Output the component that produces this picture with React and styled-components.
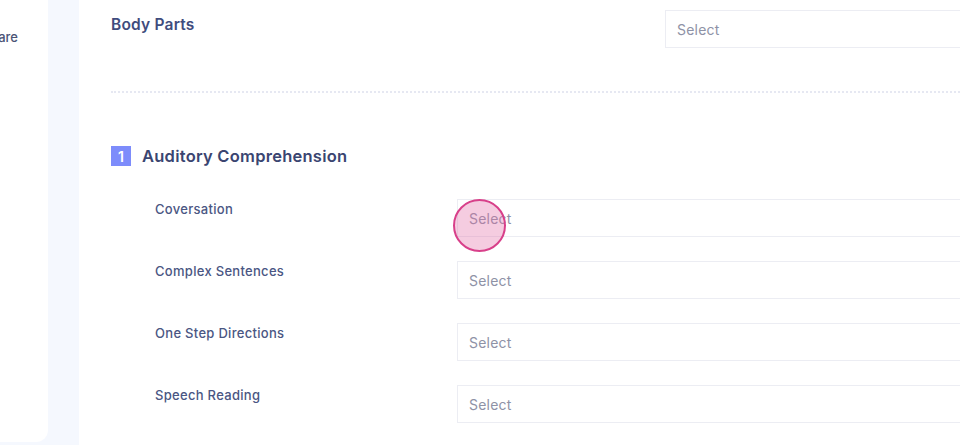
import React from 'react'
import styled, { createGlobalStyle } from 'styled-components'

const GlobalStyle = createGlobalStyle`
    html, body {
        margin: 0;
        padding: 0;
        background: #f5f8fe;
        font-family: "Inter", "Noto Sans", sans-serif;
        overflow: hidden;
    }
`

const Page = styled.div`
    display: flex;
    height: 445px;
    gap: 31px;
`

const Sidebar = styled.div`
    width: 48px;
    flex-shrink: 0;
    background: #ffffff;
    border-bottom-right-radius: 12px;
    margin-bottom: 3px;
    overflow: hidden;
    padding-top: 29px;
    box-sizing: border-box;
`

const MenuItem = styled.div`
    font-size: 13px;
    font-weight: 500;
    color: #4b5476;
    white-space: nowrap;
    direction: rtl;
    text-align: left;
    width: 18px;
    overflow: hidden;
`

const Main = styled.div`
    flex: 1;
    background: #ffffff;
    padding: 10px 0 0 32px;
    overflow: hidden;
    position: relative;
`

const TopRow = styled.div`
    display: flex;
    align-items: flex-start;
`

const TopLabel = styled.div`
    width: 554px;
    padding-top: 5px;
    font-size: 15.5px;
    font-weight: 600;
    letter-spacing: 0.2px;
    color: #3f4c7d;
`

const Select = styled.div`
    flex: 1;
    height: 38px;
    box-sizing: border-box;
    border: 1.5px solid #ecedf3;
    border-right: none;
    display: flex;
    align-items: center;
    padding-left: 11px;
    font-size: 14px;
    letter-spacing: 0.2px;
    color: #8e92a6;
`

const Divider = styled.div`
    margin-top: 43px;
    border-top: 2px dotted #e6e8f2;
`

const Section = styled.div`
    padding-top: 53px;
`

const SectionHead = styled.div`
    display: flex;
    align-items: center;
    gap: 11px;
    margin-bottom: 33px;
`

const Badge = styled.span`
    width: 20px;
    height: 20px;
    background: #7d8cfb;
    color: #ffffff;
    font-size: 14px;
    font-weight: 600;
    display: flex;
    align-items: center;
    justify-content: center;
`

const SectionTitle = styled.h3`
    margin: 0;
    font-size: 16.5px;
    font-weight: 600;
    letter-spacing: 0.25px;
    color: #3a4571;
`

const Row = styled.div`
    display: flex;
    align-items: flex-start;
    padding-left: 44px;
    margin-bottom: 24px;
`

const RowLabel = styled.div`
    width: 302px;
    flex-shrink: 0;
    font-size: 13px;
    font-weight: 500;
    letter-spacing: 0.3px;
    color: #4a5683;
    padding-top: 2px;
`

const Touch = styled.div`
    position: absolute;
    left: 374px;
    top: 199px;
    width: 49px;
    height: 49px;
    border-radius: 50%;
    background: rgba(226, 110, 165, 0.35);
    border: 2px solid #d8408a;
`

const rows = ['Coversation', 'Complex Sentences', 'One Step Directions', 'Speech Reading']

const App = () => {
    return (
        <Page>
            <GlobalStyle />
            <Sidebar>
                <MenuItem>Healthcare</MenuItem>
            </Sidebar>
            <Main>
                <TopRow>
                    <TopLabel>Body Parts</TopLabel>
                    <Select>Select</Select>
                </TopRow>
                <Divider />
                <Section>
                    <SectionHead>
                        <Badge>1</Badge>
                        <SectionTitle>Auditory Comprehension</SectionTitle>
                    </SectionHead>
                    {rows.map((r) => (
                        <Row key={r}>
                            <RowLabel>{r}</RowLabel>
                            <Select>Select</Select>
                        </Row>
                    ))}
                </Section>
                <Touch />
            </Main>
        </Page>
    )
}

export default App
